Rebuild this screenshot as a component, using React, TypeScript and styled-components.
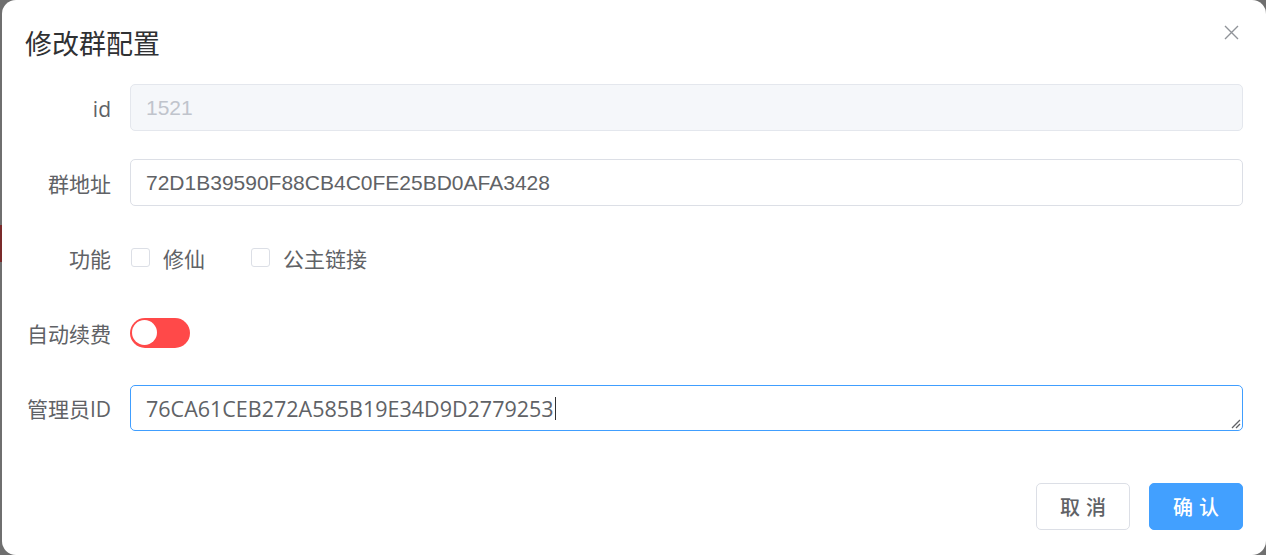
import React from "react";
import styled, { createGlobalStyle } from "styled-components";

const Global = createGlobalStyle`
  html, body { margin: 0; padding: 0; }
  body {
    width: 1266px;
    height: 555px;
    overflow: hidden;
    background: #6f6f6f;
    font-family: "Noto Sans CJK SC", "Noto Sans", sans-serif;
  }
`;

const Backdrop = styled.div`
  position: relative;
  width: 1266px;
  height: 555px;
  display: flex;
  background: #6f6f6f;
`;

const Stripe = styled.div`
  width: 2px;
  display: flex;
  flex-direction: column;
`;

const StripeSeg = styled.div<{ $h: number; $c: string }>`
  height: ${(p) => p.$h}px;
  background: ${(p) => p.$c};
`;

const Dialog = styled.div`
  position: relative;
  flex: 1;
  height: 555px;
  background: #ffffff;
  border-radius: 14px;
  box-sizing: border-box;
  display: flex;
  flex-direction: column;
  padding: 0 23px 0 23px;
`;

const Header = styled.div`
  padding-top: 26px;
  height: 34px;
  line-height: 34px;
  font-size: 27px;
  color: #303133;
  font-family: "Noto Sans CJK SC", sans-serif;
`;

const Close = styled.button`
  position: absolute;
  top: 24px;
  right: 26px;
  width: 17px;
  height: 17px;
  padding: 0;
  border: none;
  background: transparent;
  display: flex;
  align-items: center;
  justify-content: center;
`;

const Form = styled.div`
  padding-top: 24px;
  display: flex;
  flex-direction: column;
  gap: 28px;
`;

const Item = styled.div`
  display: flex;
  align-items: center;
  height: 47px;
`;

const Label = styled.label`
  width: 105px;
  flex: none;
  box-sizing: border-box;
  padding-right: 19px;
  text-align: right;
  font-size: 21px;
  color: #606266;
  font-family: "Noto Sans CJK SC", sans-serif;
  white-space: nowrap;
`;

const LatinLabel = styled.span`
  font-family: "Open Sans", "Noto Sans", sans-serif;
`;

const Input = styled.input<{ $disabled?: boolean }>`
  flex: 1;
  height: 47px;
  box-sizing: border-box;
  border: 1px solid ${(p) => (p.$disabled ? "#e4e7ed" : "#dcdfe6")};
  background: ${(p) => (p.$disabled ? "#f5f7fa" : "#ffffff")};
  color: ${(p) => (p.$disabled ? "#c0c4cc" : "#606266")};
  border-radius: 5px;
  padding: 0 15px;
  font-size: 21px;
  font-family: "Liberation Sans", Arial, sans-serif;
  outline: none;
`;

const Checks = styled.div`
  display: flex;
  align-items: center;
  gap: 45px;
`;

const Check = styled.div`
  display: flex;
  align-items: center;
  gap: 13px;
  font-size: 21px;
  color: #606266;
  font-family: "Noto Sans CJK SC", sans-serif;
`;

const Box = styled.span`
  width: 19px;
  height: 19px;
  box-sizing: border-box;
  border: 1px solid #dcdfe6;
  border-radius: 3px;
  background: #fff;
  margin-left: 1px;
`;

const Switch = styled.span`
  width: 60px;
  height: 30px;
  border-radius: 15px;
  background: #ff4949;
  display: flex;
  align-items: center;
  padding: 0 2px;
  box-sizing: border-box;
`;

const Thumb = styled.span`
  width: 25px;
  height: 25px;
  border-radius: 50%;
  background: #ffffff;
`;

const TextAreaWrap = styled.div`
  position: relative;
  flex: 1;
  height: 46px;
  margin-top: 1px;
  box-sizing: border-box;
  border: 1px solid #409eff;
  border-radius: 5px;
  padding: 0 15px;
  display: flex;
  align-items: center;
  font-size: 21.5px;
  color: #606266;
  font-family: "Open Sans", "Noto Sans", sans-serif;
`;

const Caret = styled.span`
  display: inline-block;
  width: 1.5px;
  height: 23px;
  background: #303133;
  margin-left: 1px;
`;

const Grip = styled.svg`
  position: absolute;
  right: 1px;
  bottom: 1px;
`;

const Footer = styled.div`
  margin-top: 52px;
  display: flex;
  justify-content: flex-end;
  gap: 19px;
`;

const Button = styled.button<{ $primary?: boolean }>`
  width: 94px;
  height: 47px;
  box-sizing: border-box;
  border-radius: 5px;
  border: 1px solid ${(p) => (p.$primary ? "#42a0ff" : "#dcdfe6")};
  background: ${(p) => (p.$primary ? "#42a0ff" : "#ffffff")};
  color: ${(p) => (p.$primary ? "#ffffff" : "#606266")};
  font-size: 20px;
  font-weight: 500;
  letter-spacing: 6px;
  padding: 0 0 0 6px;
  font-family: "Noto Sans CJK SC", sans-serif;
`;

export default function App() {
  return (
    <>
      <Global />
      <Backdrop>
        <Stripe>
          <StripeSeg $h={225} $c="#6f6f6f" />
          <StripeSeg $h={37} $c="#7a2a2a" />
          <StripeSeg $h={293} $c="#6f6f6f" />
        </Stripe>
        <Dialog>
          <Header>修改群配置</Header>
          <Close aria-label="close">
            <svg width="15" height="15" viewBox="0 0 15 15">
              <path d="M1 1 L14 14 M14 1 L1 14" stroke="#909399" strokeWidth="1.4" />
            </svg>
          </Close>
          <Form>
            <Item>
              <Label>
                <LatinLabel>id</LatinLabel>
              </Label>
              <Input $disabled readOnly value="1521" />
            </Item>
            <Item>
              <Label>群地址</Label>
              <Input readOnly value="72D1B39590F88CB4C0FE25BD0AFA3428" />
            </Item>
            <Item>
              <Label>功能</Label>
              <Checks>
                <Check>
                  <Box />
                  修仙
                </Check>
                <Check>
                  <Box />
                  公主链接
                </Check>
              </Checks>
            </Item>
            <Item>
              <Label>自动续费</Label>
              <Switch>
                <Thumb />
              </Switch>
            </Item>
            <Item>
              <Label>
                管理员<LatinLabel>ID</LatinLabel>
              </Label>
              <TextAreaWrap>
                76CA61CEB272A585B19E34D9D2779253
                <Caret />
                <Grip width="10" height="10" viewBox="0 0 10 10">
                  <path d="M1 9 L9 1 M5 9 L9 5" stroke="#606266" strokeWidth="1.3" />
                </Grip>
              </TextAreaWrap>
            </Item>
          </Form>
          <Footer>
            <Button>取消</Button>
            <Button $primary>确认</Button>
          </Footer>
        </Dialog>
      </Backdrop>
    </>
  );
}
